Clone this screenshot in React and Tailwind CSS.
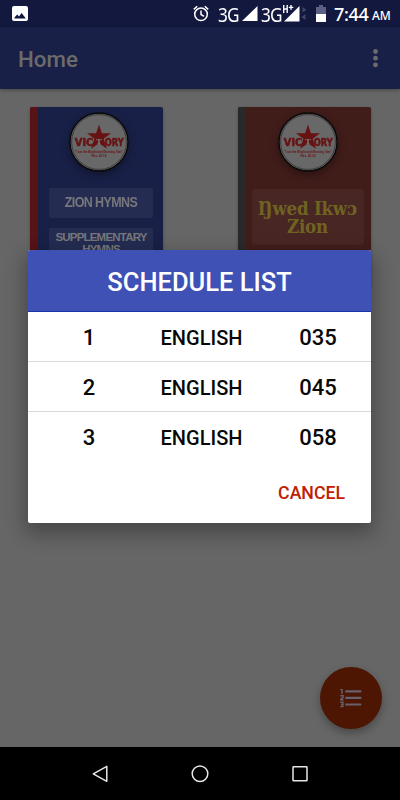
import React from 'react';

const hymns = [
  { id: 1, language: 'ENGLISH', number: '035' },
  { id: 2, language: 'ENGLISH', number: '045' },
  { id: 3, language: 'ENGLISH', number: '058' },
];

function StatusBar() {
  return (
    <div className="h-[27px] shrink-0 bg-[#13183f] flex items-center text-white font-['Noto_Sans',sans-serif]">
      <svg className="ml-3 w-4 h-[15px]" viewBox="0 0 16 15">
        <rect width="16" height="15" rx="2" fill="#fff" />
        <path d="M2.5 12.5v-1l2.7-3 1.8 2L9.6 7l3.9 5v.5z" fill="#13183f" />
      </svg>
      <svg className="ml-[165px] w-4 h-[17px]" viewBox="0 0 16 17" fill="none" stroke="#fff" strokeWidth="1.5">
        <circle cx="8" cy="9.3" r="6.3" />
        <path d="M8 5.5v4l3 1.8M.8 4.4 4.2 1.3M15.2 4.4l-3.4-3.1" />
      </svg>
      <span className="ml-[9px] mt-[2px] w-[22px] text-[20.5px] leading-none tracking-[-1px] origin-left scale-x-[0.84] whitespace-nowrap">3G</span>
      <svg className="ml-[2px] w-4 h-[15px]" viewBox="0 0 16 15"><path d="M15.5 0v15H0z" fill="#fff" /></svg>
      <span className="ml-[3px] mt-[2px] w-[21px] text-[20.5px] leading-none tracking-[-1px] origin-left scale-x-[0.84] whitespace-nowrap">3G</span>
      <svg className="w-[26px] h-[18px] mb-[2px]" viewBox="0 0 26 18">
        <path d="M17.5 2v15.5H2z" fill="#fff" />
        <path d="M1.7 1v8M5.2 1v8M1.7 5h3.5M6.2 3.6h5.4M9 1v5.4" stroke="#13183f" strokeWidth="3" />
        <path d="M1.7 1v8M5.2 1v8M1.7 5h3.5M6.8 3.4h4.5M9 1v4.8" stroke="#fff" strokeWidth="1.4" />
        <path d="m20.5 3 4 2.7-4 2.7zM23.5 10v6l-4-3z" fill="#41456a" />
      </svg>
      <svg className="ml-[8px] w-[10px] h-[17px]" viewBox="0 0 10 17">
        <path d="M3 0h4v2h3v15H0V2h3z" fill="#5d6085" />
        <path d="M0 9h10v8H0z" fill="#fff" />
      </svg>
      <span className="ml-[8px] w-[36px] text-[18px] leading-none font-medium tracking-[-0.3px] whitespace-nowrap">7:44</span>
      <span className="ml-[2px] mt-[4px] text-[12px] leading-none font-medium tracking-[-0.1px] whitespace-nowrap">AM</span>
    </div>
  );
}

function VictoryLogo() {
  return (
    <svg className="w-[60px] h-[60px] shrink-0 overflow-visible drop-shadow-[0_3px_4px_rgba(0,0,0,0.4)]" viewBox="0 0 60 60">
      <circle cx="30" cy="30" r="29" fill="#686868" stroke="#080808" strokeWidth="1.3" />
      <circle cx="30" cy="30" r="27.4" fill="none" stroke="#222" strokeWidth="0.6" />
      <path d="m30 12.5 2.9 8.7 9.1.1-7.3 5.5 3.2 10-7.9-5.6-7.9 5.6 3.2-10-7.3-5.5 9.1-.1z" fill="#681313" />
      <g fill="#681313" stroke="#681313" strokeWidth=".5" fontFamily="DejaVu Sans Condensed, DejaVu Sans, sans-serif" fontWeight="bold" fontSize="11">
        <text x="5.8" y="34" textLength="18.5" lengthAdjust="spacingAndGlyphs">VIC</text>
        <text x="35.8" y="34" textLength="19" lengthAdjust="spacingAndGlyphs">ORY</text>
      </g>
      <text x="30" y="32.2" textAnchor="middle" fill="#777" fontFamily="DejaVu Serif, serif" fontWeight="bold" fontSize="8">T</text>
      <g fill="#681313" fontFamily="Liberation Sans, sans-serif" fontWeight="bold" fontSize="3.1" textAnchor="middle">
        <text x="30" y="40.6" textLength="48" lengthAdjust="spacingAndGlyphs">"I am the Bright and Morning Star"</text>
        <text x="30" y="44.8" textLength="15" lengthAdjust="spacingAndGlyphs">Rev. 22:16</text>
      </g>
    </svg>
  );
}

function BookShelf() {
  return (
    <div className="flex justify-between pl-[30px] pr-[29px] pt-[18px]">
      <div className="w-[133px] h-[180px] flex rounded-[2px] overflow-hidden bg-[#192047] shadow-[0_1px_3px_rgba(0,0,0,0.3)]">
        <div className="w-2 bg-[#571316]" />
        <div className="flex-1 flex flex-col items-center pt-[5px] pr-[4px]">
          <VictoryLogo />
          <div className="mt-4 ml-[5px] w-[104px] h-[30px] rounded-[2px] bg-[#242c52] text-[#77777b] font-['Liberation_Sans',sans-serif] font-bold text-[12.5px] tracking-[-0.6px] flex items-center justify-center">
            <span className="scale-y-110">ZION HYMNS</span>
          </div>
          <div className="mt-[10px] ml-[5px] w-[104px] h-10 pt-[3px] rounded-[2px] bg-[#242c52] text-[#77777b] font-['Liberation_Sans',sans-serif] font-bold text-[11.5px] tracking-[-0.8px] leading-[12px] text-center">
            SUPPLEMENTARY HYMNS
          </div>
        </div>
      </div>
      <div className="w-[133px] h-[180px] flex rounded-[2px] overflow-hidden bg-[#411d1a] shadow-[0_1px_3px_rgba(0,0,0,0.3)]">
        <div className="w-2 bg-[#292929]" />
        <div className="flex-1 flex flex-col items-center pt-[5px] pr-[2px]">
          <VictoryLogo />
          <div className="mt-[17px] w-[112px] h-[56px] pt-[11px] rounded-[3px] bg-[#482624] text-[#706322] text-center font-['DejaVu_Serif_Condensed','DejaVu_Serif',serif] font-bold text-[18.5px] leading-[18px] tracking-[-0.2px] whitespace-nowrap">
            <div>Ŋwed Ikwɔ</div>
            <div>Zion</div>
          </div>
        </div>
      </div>
    </div>
  );
}

function ScheduleDialog() {
  return (
    <div className="absolute left-7 top-[250px] w-[343px] h-[273px] rounded-[2px] overflow-hidden bg-white shadow-[0_8px_20px_3px_rgba(0,0,0,0.3)]">
      <div className="h-[62px] pt-[4px] bg-[#3f51b5] border-b border-[#1835ad] flex items-center justify-center text-white text-[25.5px] font-medium">
        SCHEDULE LIST
      </div>
      {hymns.map((hymn, i) => (
        <div
          key={hymn.id}
          className={`h-[50px] shrink-0 flex items-center text-[#080808] font-medium border-b ${i < hymns.length - 1 ? 'border-[#dadada]' : 'border-transparent'}`}
        >
          <span className="w-[122px] pt-[2px] text-center text-[22px]">{hymn.id}</span>
          <span className="w-[103px] pt-[3px] text-center text-[20px]">{hymn.language}</span>
          <span className="w-[118px] pt-[2px] pl-[12px] text-center text-[22px]">{hymn.number}</span>
        </div>
      ))}
      <div className="h-[61px] pt-[2px] flex items-center justify-end pr-[26px]">
        <button className="text-[#bf2000] text-[17.7px] font-medium">CANCEL</button>
      </div>
    </div>
  );
}

function NavigationBar() {
  return (
    <div className="h-[53px] shrink-0 bg-black flex items-center justify-between px-[90px]">
      <svg className="w-5 h-5" viewBox="0 0 20 20" fill="none" stroke="#e6e6e6" strokeWidth="1.5">
        <path d="M16.8 2.3v15L3.3 9.8z" strokeLinejoin="round" />
      </svg>
      <svg className="w-5 h-5" viewBox="0 0 20 20" fill="none" stroke="#e6e6e6" strokeWidth="1.5">
        <circle cx="10" cy="9.7" r="7.8" />
      </svg>
      <svg className="w-5 h-5" viewBox="0 0 20 20" fill="none" stroke="#e6e6e6" strokeWidth="1.5">
        <rect x="3" y="2.8" width="14" height="14" rx=".5" />
      </svg>
    </div>
  );
}

export default function App() {
  return (
    <div className="relative w-[400px] h-[800px] overflow-hidden flex flex-col bg-[#666] font-['Roboto',sans-serif]">
      <StatusBar />
      <header className="h-[62px] shrink-0 bg-[#192047] px-[18px] pt-[3px] flex items-center justify-between text-[#6b6b6b] shadow-[0_1px_4px_rgba(0,0,0,0.35)]">
        <h1 className="text-[22.3px] font-medium">Home</h1>
        <svg className="w-[5px] h-[19px] mr-1 mb-[3px]" viewBox="0 0 5 19" fill="currentColor">
          <circle cx="2.5" cy="2.5" r="2.4" />
          <circle cx="2.5" cy="9.2" r="2.4" />
          <circle cx="2.5" cy="15.9" r="2.4" />
        </svg>
      </header>
      <main className="flex-1">
        <BookShelf />
      </main>
      <button className="absolute left-[320px] top-[667px] w-[62px] h-[62px] rounded-full bg-[#4c1603] flex items-center justify-center shadow-[0_4px_9px_rgba(0,0,0,0.3)]">
        <svg className="w-[22px] h-[20px]" viewBox="0 0 22 20" fill="none" stroke="#68606a">
          <path d="M5.3 3.3h16M5.3 9.8h16M5.3 16.5h16" strokeWidth="2.2" />
          <path d="M.3 1.6H2v4.4M.2 7.8h2.9v1.4L.8 11.4v.3h2.7M.2 14.3h2.7v4.3H.2M.9 16.5h2" strokeWidth="1.4" />
        </svg>
      </button>
      <ScheduleDialog />
      <NavigationBar />
    </div>
  );
}
